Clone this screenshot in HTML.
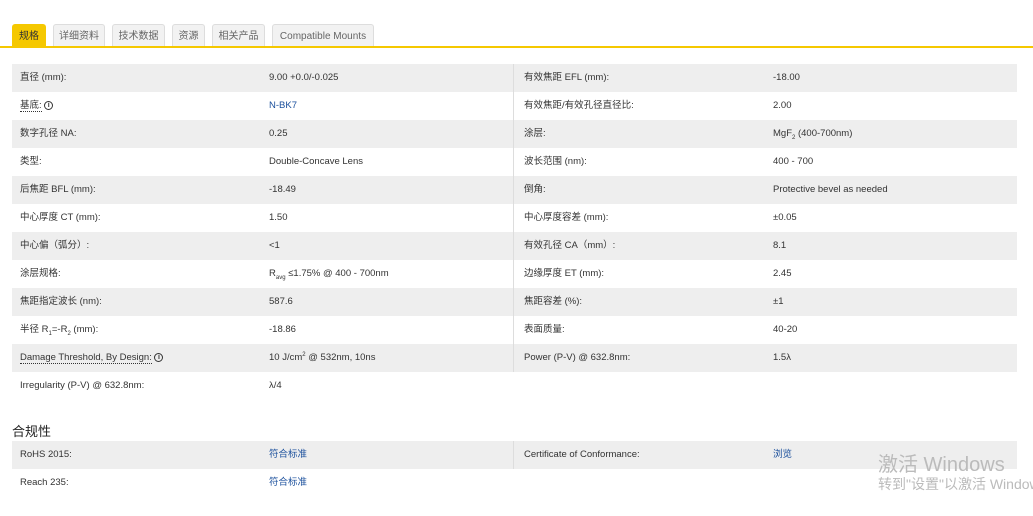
<!DOCTYPE html><html><head><meta charset="utf-8"><style>
body{margin:0;width:1033px;height:516px;background:#fff;font-family:"Liberation Sans","Noto Sans CJK SC",sans-serif;font-size:9.5px;color:#333;position:relative;overflow:hidden}
.tab{position:absolute;top:24px;height:22px;line-height:24px;background:#f2f2f2;border:1px solid #ddd;border-bottom:none;border-radius:3px 3px 0 0;text-align:center;color:#666;font-size:10px;box-sizing:border-box}
.tab.a{background:#f5c800;border-color:#f5c800;color:#333}
.line{position:absolute;top:46px;left:0;width:1033px;height:2px;background:#f5c800}
table{position:absolute;left:12px;width:1005px;border-collapse:collapse}
td{height:28px;padding:0;vertical-align:middle;line-height:12px}
tr.g td{background:#eee}
td.l{padding-left:8px;width:249px}td.v{width:244px;border-right:1px solid #ddd}
td.l2{padding-left:10px;width:249px}
a{color:#1a4f9c;text-decoration:none}
sub,sup{font-size:6px;line-height:0}
.u{border-bottom:1px dotted #333}
.i{display:inline-block;width:9px;height:9px;border:1px solid #333;border-radius:50%;font-size:7px;line-height:8px;text-align:center;font-weight:bold;box-sizing:border-box;vertical-align:middle}
h3{position:absolute;left:12px;top:421px;margin:0;font-size:13px;font-weight:normal;color:#222}
.wm{position:absolute;left:878px;color:#bbb;white-space:nowrap}
</style></head><body>
<div class="tab a" style="left:12px;width:34px">规格</div>
<div class="tab" style="left:53px;width:52px">详细资料</div>
<div class="tab" style="left:112px;width:53px">技术数据</div>
<div class="tab" style="left:172px;width:33px">资源</div>
<div class="tab" style="left:212px;width:53px">相关产品</div>
<div class="tab" style="left:272px;width:102px">Compatible Mounts</div>
<div class="line"></div>
<table style="top:64px">
<tr class="g"><td class="l">直径 (mm):</td><td class="v">9.00 +0.0/-0.025</td><td class="l2">有效焦距 EFL (mm):</td><td>-18.00</td></tr>
<tr><td class="l"><span class="u">基底:</span> <span class="i">i</span></td><td class="v"><a>N-BK7</a></td><td class="l2">有效焦距/有效孔径直径比:</td><td>2.00</td></tr>
<tr class="g"><td class="l">数字孔径 NA:</td><td class="v">0.25</td><td class="l2">涂层:</td><td>MgF<sub>2</sub> (400-700nm)</td></tr>
<tr><td class="l">类型:</td><td class="v">Double-Concave Lens</td><td class="l2">波长范围 (nm):</td><td>400 - 700</td></tr>
<tr class="g"><td class="l">后焦距 BFL (mm):</td><td class="v">-18.49</td><td class="l2">倒角:</td><td>Protective bevel as needed</td></tr>
<tr><td class="l">中心厚度 CT (mm):</td><td class="v">1.50</td><td class="l2">中心厚度容差 (mm):</td><td>±0.05</td></tr>
<tr class="g"><td class="l">中心偏（弧分）:</td><td class="v">&lt;1</td><td class="l2">有效孔径 CA（mm）:</td><td>8.1</td></tr>
<tr><td class="l">涂层规格:</td><td class="v">R<sub>avg</sub> ≤1.75% @ 400 - 700nm</td><td class="l2">边缘厚度 ET (mm):</td><td>2.45</td></tr>
<tr class="g"><td class="l">焦距指定波长 (nm):</td><td class="v">587.6</td><td class="l2">焦距容差 (%):</td><td>±1</td></tr>
<tr><td class="l">半径 R<sub>1</sub>=-R<sub>2</sub> (mm):</td><td class="v">-18.86</td><td class="l2">表面质量:</td><td>40-20</td></tr>
<tr class="g"><td class="l"><span class="u">Damage Threshold, By Design:</span> <span class="i">i</span></td><td class="v">10 J/cm<sup>2</sup> @ 532nm, 10ns</td><td class="l2">Power (P-V) @ 632.8nm:</td><td>1.5λ</td></tr>
<tr><td class="l">Irregularity (P-V) @ 632.8nm:</td><td class="v" style="border-right:none">λ/4</td><td class="l2"></td><td></td></tr>
</table>
<h3>合规性</h3>
<table style="top:441px">
<tr class="g"><td class="l">RoHS 2015:</td><td class="v"><a>符合标准</a></td><td class="l2">Certificate of Conformance:</td><td><a>浏览</a></td></tr>
<tr><td class="l">Reach 235:</td><td class="v" style="border-right:none"><a>符合标准</a></td><td class="l2"></td><td></td></tr>
</table>
<div class="wm" style="top:448px;font-size:20px">激活 Windows</div>
<div class="wm" style="top:474px;font-size:14px">转到"设置"以激活 Windows。</div>
</body></html>
